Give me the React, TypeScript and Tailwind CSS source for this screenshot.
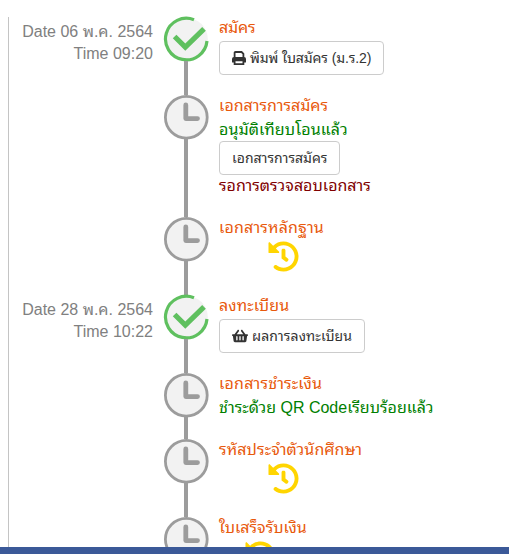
import type { ReactNode } from "react";
import { FaHistory, FaShoppingBasket } from "react-icons/fa";

type Step = {
  title: string;
  titleClass?: string;
  rowClass: string;
  done?: boolean;
  date?: string;
  time?: string;
  content: ReactNode;
};

function DoneMark() {
  return (
    <svg viewBox="0 0 46 46" className="-mx-px -mt-px size-[46px] shrink-0" fill="none">
      <circle cx="23.3" cy="23.3" r="21.5" fill="#f2f2f2" />
      <path d="M31 3.7A20.8 20.8 0 1 0 44 25" stroke="#5fc05f" strokeWidth="3.2" />
      <path d="M11.6 20.5L22.3 31L41 12.8" stroke="#5fc05f" strokeWidth="5.2" />
    </svg>
  );
}

function WaitMark() {
  return (
    <svg viewBox="0 0 46 46" className="-mx-px -mt-px size-[46px] shrink-0" fill="none">
      <circle cx="23.3" cy="23.3" r="20.9" fill="#f2f2f2" stroke="#9c9c9c" strokeWidth="2.8" />
      <path d="M22.8 11V24.6H34.5" stroke="#9c9c9c" strokeWidth="4.8" strokeLinecap="round" strokeLinejoin="round" />
    </svg>
  );
}

function PrintIcon() {
  return (
    <svg viewBox="0 0 14 14" className="size-3.5 shrink-0" fill="none" stroke="currentColor">
      <path d="M2.6 7V1.9Q2.6 1 3.5 1H9.6L11.4 2.8V7" strokeWidth="1.8" />
      <path d="M0 8Q0 6 2 6H12Q14 6 14 8V11Q14 11.5 13.5 11.5H.5Q0 11.5 0 11Z" fill="currentColor" stroke="none" />
      <path d="M2.6 9.4H11.4V13.1H2.6Z" fill="#fff" strokeWidth="1.8" />
    </svg>
  );
}

function OutlineButton({ className, children }: { className: string; children: ReactNode }) {
  return (
    <button
      type="button"
      className={`flex h-[34px] items-center justify-start gap-1 rounded border border-[#ccc] bg-white pl-3 text-sm whitespace-nowrap text-[#333] ${className}`}
    >
      {children}
    </button>
  );
}

const steps: Step[] = [
  {
    title: "สมัคร",
    titleClass: "tracking-[-0.2px]",
    rowClass: "h-[78px]",
    done: true,
    date: "Date 06 พ.ค. 2564",
    time: "Time 09:20",
    content: (
      <OutlineButton className="w-[165px]">
        <PrintIcon />
        <span className="tracking-[-0.1px]">พิมพ์ ใบสมัคร (ม.ร.2)</span>
      </OutlineButton>
    ),
  },
  {
    title: "เอกสารการสมัคร",
    rowClass: "h-[122px]",
    content: (
      <>
        <p className="h-[22px] leading-[22px] tracking-[0.1px] text-[green]">อนุมัติเทียบโอนแล้ว</p>
        <OutlineButton className="w-[121px]">
          <span>เอกสารการสมัคร</span>
        </OutlineButton>
        <p className="h-[22px] leading-[22px] text-[maroon]">รอการตรวจสอบเอกสาร</p>
      </>
    ),
  },
  {
    title: "เอกสารหลักฐาน",
    titleClass: "tracking-[0.15px]",
    rowClass: "h-[78px]",
    content: <FaHistory className="ml-[49px] size-[31px] text-[#ffd500]" />,
  },
  {
    title: "ลงทะเบียน",
    titleClass: "tracking-[0.1px]",
    rowClass: "h-[78px]",
    done: true,
    date: "Date 28 พ.ค. 2564",
    time: "Time 10:22",
    content: (
      <OutlineButton className="w-[146px]">
        <FaShoppingBasket className="size-4 shrink-0" />
        <span className="tracking-[0.1px]">ผลการลงทะเบียน</span>
      </OutlineButton>
    ),
  },
  {
    title: "เอกสารชำระเงิน",
    titleClass: "tracking-[0.2px]",
    rowClass: "h-[66px]",
    content: <p className="h-[22px] leading-[22px] text-[green]">ชำระด้วย QR Codeเรียบร้อยแล้ว</p>,
  },
  {
    title: "รหัสประจำตัวนักศึกษา",
    titleClass: "tracking-[0.1px]",
    rowClass: "h-[78px]",
    content: <FaHistory className="ml-[49px] size-[31px] text-[#ffd500]" />,
  },
  {
    title: "ใบเสร็จรับเงิน",
    rowClass: "h-[78px]",
    content: <FaHistory className="ml-[26px] size-[31px] text-[#ffd500]" />,
  },
];

function TimelineRow({ step }: { step: Step }) {
  return (
    <li className={`flex ${step.rowClass}`}>
      <div className="w-[144px] shrink-0 pt-1 text-right leading-[22px] text-[#808080]">
        <p>{step.date}</p>
        <p>{step.time}</p>
      </div>
      <div className="ml-[11px] flex w-11 shrink-0 flex-col items-center">
        {step.done ? <DoneMark /> : <WaitMark />}
        <div className="-mt-px w-1 grow bg-[#9c9c9c]" />
      </div>
      <div className="ml-[11px] whitespace-nowrap">
        <h4 className={`h-6 leading-[22px] text-[#e8590c] ${step.titleClass ?? ""}`}>{step.title}</h4>
        {step.content}
      </div>
    </li>
  );
}

export default function App() {
  return (
    <div className="relative h-[554px] w-[509px] overflow-hidden bg-white pt-[17px] pl-2 font-['Liberation_Sans',Tahoma,'Noto_Sans_Thai_Looped','Noto_Looped_Thai',Loma,Waree,Garuda,'Noto_Serif_Thai',sans-serif] text-base">
      <div className="flex border-l border-[#c4c4c4]">
        <ul>
          {steps.map((step) => (
            <TimelineRow key={step.title} step={step} />
          ))}
        </ul>
      </div>
      <div className="absolute inset-x-0 bottom-0 h-[7px] bg-[#3b5998]" />
    </div>
  );
}
